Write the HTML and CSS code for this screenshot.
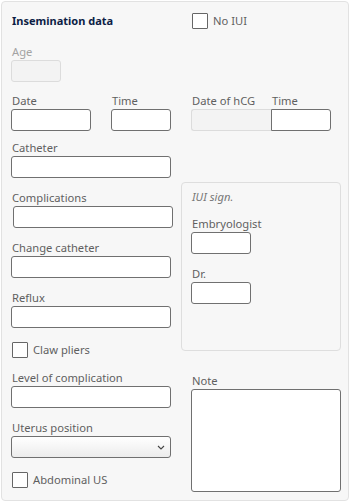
FILE: index.html
```html
<!DOCTYPE html>
<html lang="en">
<head>
  <meta charset="UTF-8">
  <meta name="viewport" content="width=device-width, initial-scale=1">
  <title>Insemination data</title>
  <link rel="stylesheet" href="styles.css">
</head>
<body>

  <div class="panel">
    <!-- Cabeçalho -->
    <div class="head-row">
      <div class="titulo">Insemination data</div>
      <label class="check"><span class="box"></span>No IUI</label>
    </div>

    <div class="field age-field">
      <label class="lbl disabled">Age</label>
      <input type="text" class="inp w-age" disabled>
    </div>

    <div class="dates-row">
      <div class="dates-left">
        <div class="field">
          <label class="lbl">Date</label>
          <input type="text" class="inp w-date">
        </div>
        <div class="field">
          <label class="lbl">Time</label>
          <input type="text" class="inp w-time">
        </div>
      </div>
      <div class="dates-right">
        <div class="field">
          <label class="lbl">Date of hCG</label>
          <input type="text" class="inp w-date join-l" disabled>
        </div>
        <div class="field">
          <label class="lbl">Time</label>
          <input type="text" class="inp w-time join-r">
        </div>
      </div>
    </div>

    <div class="field catheter-field">
      <label class="lbl">Catheter</label>
      <input type="text" class="inp w-full">
    </div>

    <div class="cols">
      <div class="col-left">
        <div class="field">
          <label class="lbl">Complications</label>
          <input type="text" class="inp w-full shift">
        </div>
        <div class="field gap">
          <label class="lbl">Change catheter</label>
          <input type="text" class="inp w-full">
        </div>
        <div class="field gap">
          <label class="lbl">Reflux</label>
          <input type="text" class="inp w-full">
        </div>
        <label class="check check-row"><span class="box"></span>Claw pliers</label>
        <div class="field gap">
          <label class="lbl">Level of complication</label>
          <input type="text" class="inp w-full">
        </div>
        <div class="field gap">
          <label class="lbl">Uterus position</label>
          <div class="sel w-full">
            <svg width="8" height="5" viewBox="0 0 8 5"><path d="M1 1 L4 4 L7 1" fill="none" stroke="#444" stroke-width="1.1"/></svg>
          </div>
        </div>
        <label class="check check-row"><span class="box"></span>Abdominal US</label>
      </div>

      <div class="col-right">
        <div class="sign-box">
          <div class="sign-title">IUI sign.</div>
          <div class="field sign-first">
            <label class="lbl">Embryologist</label>
            <input type="text" class="inp w-time">
          </div>
          <div class="field gap">
            <label class="lbl">Dr.</label>
            <input type="text" class="inp w-time">
          </div>
        </div>
        <div class="field note-field">
          <label class="lbl">Note</label>
          <textarea class="inp note"></textarea>
        </div>
      </div>
    </div>
  </div>

</body>
</html>
```

FILE: styles.css
```css
/* Reset básico */
* { margin: 0; padding: 0; box-sizing: border-box; }
body { font-family: "Noto Sans", "Open Sans", sans-serif; font-size: 11.2px; color: #5f5f5f; background: #fff; }

.panel { margin: 1px; width: 348px; height: 500px; background: #f7f7f7; border: 1px solid #e2e2e2; border-radius: 4px; padding: 9px 7px 9px 9px; }

.head-row { display: flex; align-items: center; height: 18px; margin-top: 1px; }
.titulo { width: 181px; padding-left: 1px; font-size: 11px; font-weight: bold; color: #0c1d45; line-height: 18px; }

.check { display: flex; align-items: center; gap: 5px; line-height: 16px; color: #5f5f5f; }
.check .box { flex-shrink: 0; width: 16px; height: 16px; background: #fff; border: 1px solid #666; border-radius: 1px; }
.check-row { margin-top: 14px; padding-left: 1px; }

.field { display: flex; flex-direction: column; align-items: flex-start; }
.lbl { display: block; line-height: 16px; padding-left: 1px; color: #5f5f5f; }
.lbl.disabled { color: #a3a3a3; }
.gap { margin-top: 12px; }

.inp { display: block; height: 22px; background: #fff; border: 1px solid #707070; border-radius: 3px; font: inherit; outline: none; }
.inp:disabled { background: #f3f3f3; border-color: #dcdcdc; }
.w-age { width: 50px; }
.w-date { width: 80px; }
.w-time { width: 60px; }
.w-full { width: 160px; }
.shift { margin-left: 2px; }
.join-l { border-radius: 3px 0 0 3px; border-right: none; }
.join-r { border-radius: 0 3px 3px 0; }

.age-field { margin-top: 14px; }

.dates-row { display: flex; margin-top: 11px; }
.dates-left { display: flex; gap: 20px; width: 180px; flex-shrink: 0; }
.dates-right { display: flex; }

.catheter-field { margin-top: 9px; }

.cols { display: flex; }
.col-left { width: 170px; flex-shrink: 0; padding-top: 12px; }
.col-right { flex-shrink: 0; padding-top: 4px; }

.sel { height: 22px; border: 1px solid #707070; border-radius: 3px; background: linear-gradient(#fff, #ececec); display: flex; align-items: center; justify-content: flex-end; padding-right: 5px; }

.sign-box { width: 160px; height: 169px; border: 1px solid #dedede; border-radius: 4px; padding: 6px 9px; }
.sign-title { font-style: italic; color: #777; line-height: 16px; padding-left: 1px; }
.sign-first { margin-top: 11px; }

.note-field { margin-top: 22px; margin-left: 10px; }
.note { width: 150px; height: 103px; resize: none; }
```
